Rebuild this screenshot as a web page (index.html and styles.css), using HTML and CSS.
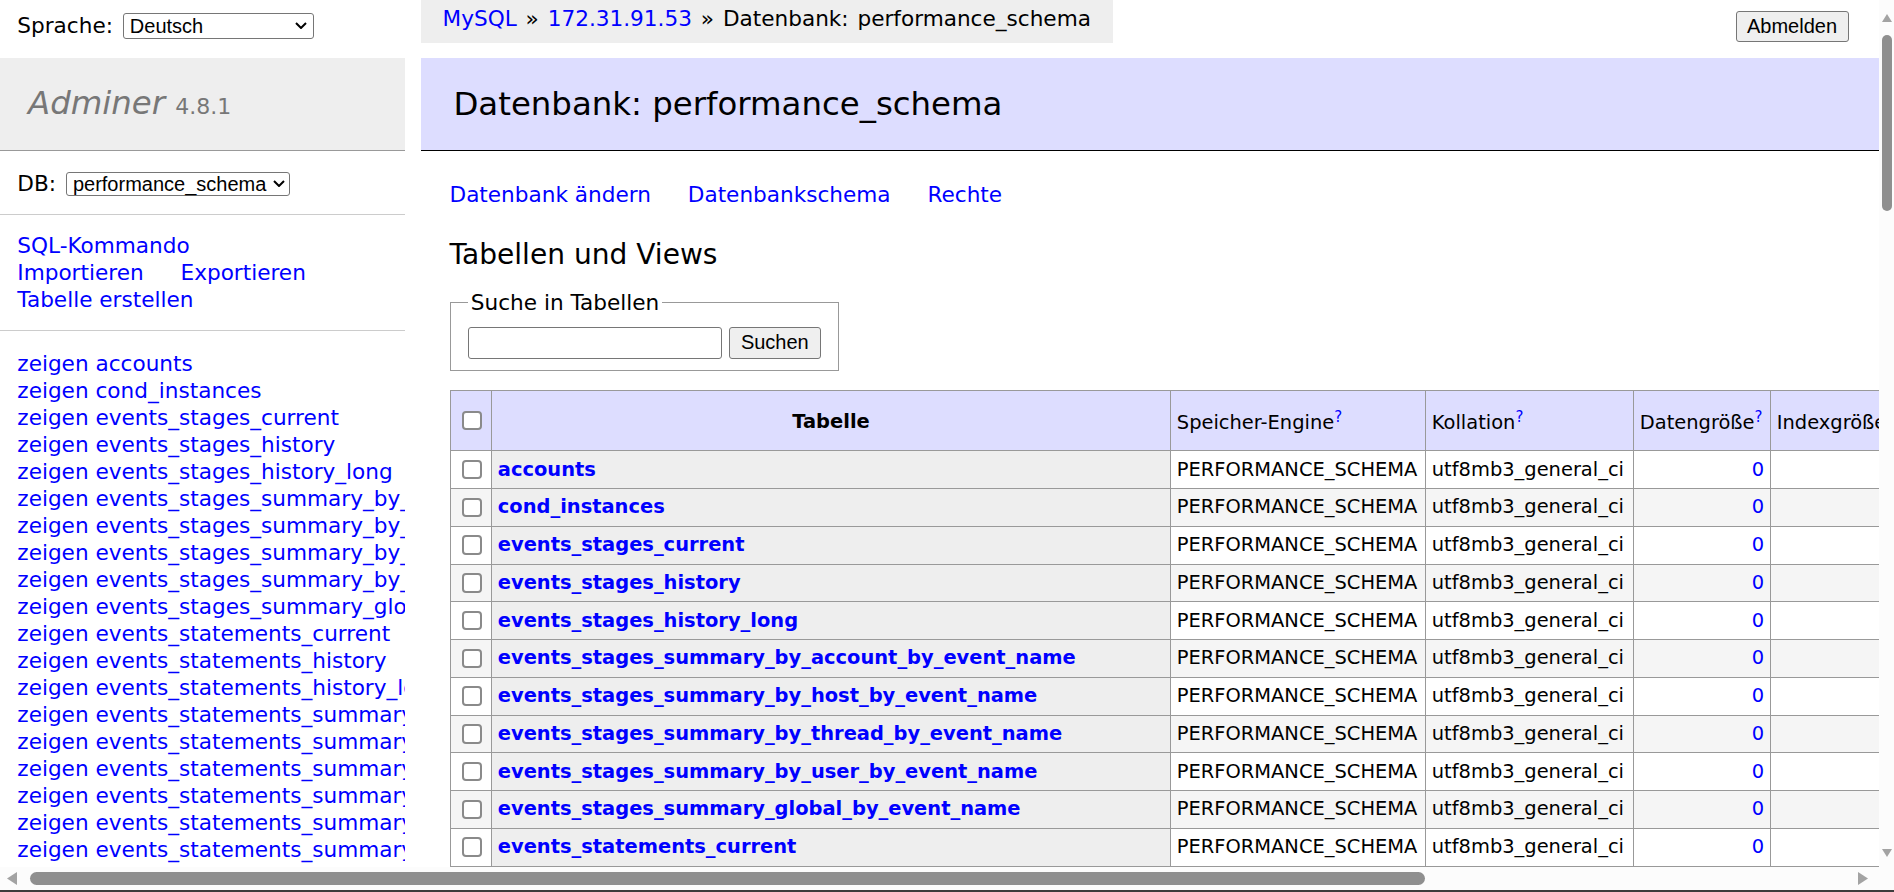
FILE: index.html
```html
<!DOCTYPE html>
<html lang="de">
<head>
<meta charset="utf-8">
<title>Datenbank: performance_schema - Adminer</title>
<link rel="stylesheet" href="styles.css">
</head>
<body>
<div class="window">
  <div class="viewport">
    <div class="page">
      <aside class="menu">
        <div class="lang">Sprache: <span class="select select-lang"><span>Deutsch</span><svg class="chev" viewBox="0 0 12 7"><polyline points="1,1 6,6 11,1" fill="none" stroke="#000" stroke-width="2"/></svg></span></div>
        <h1 class="logo">Adminer <span class="version">4.8.1</span></h1>
        <div class="menu-block db-block">DB: <span class="select select-db"><span>performance_schema</span><svg class="chev" viewBox="0 0 12 7"><polyline points="1,1 6,6 11,1" fill="none" stroke="#000" stroke-width="2"/></svg></span></div>
        <div class="menu-block links">
          <a href="#">SQL-Kommando</a><br>
          <a href="#">Importieren</a> <a href="#">Exportieren</a><br>
          <a href="#">Tabelle erstellen</a>
        </div>
        <ul class="tablelist">
          <li><a href="#">zeigen</a> <a href="#">accounts</a></li>
          <li><a href="#">zeigen</a> <a href="#">cond_instances</a></li>
          <li><a href="#">zeigen</a> <a href="#">events_stages_current</a></li>
          <li><a href="#">zeigen</a> <a href="#">events_stages_history</a></li>
          <li><a href="#">zeigen</a> <a href="#">events_stages_history_long</a></li>
          <li><a href="#">zeigen</a> <a href="#">events_stages_summary_by_account_by_event_name</a></li>
          <li><a href="#">zeigen</a> <a href="#">events_stages_summary_by_host_by_event_name</a></li>
          <li><a href="#">zeigen</a> <a href="#">events_stages_summary_by_thread_by_event_name</a></li>
          <li><a href="#">zeigen</a> <a href="#">events_stages_summary_by_user_by_event_name</a></li>
          <li><a href="#">zeigen</a> <a href="#">events_stages_summary_global_by_event_name</a></li>
          <li><a href="#">zeigen</a> <a href="#">events_statements_current</a></li>
          <li><a href="#">zeigen</a> <a href="#">events_statements_history</a></li>
          <li><a href="#">zeigen</a> <a href="#">events_statements_history_long</a></li>
          <li><a href="#">zeigen</a> <a href="#">events_statements_summary_by_account_by_event_name</a></li>
          <li><a href="#">zeigen</a> <a href="#">events_statements_summary_by_digest</a></li>
          <li><a href="#">zeigen</a> <a href="#">events_statements_summary_by_host_by_event_name</a></li>
          <li><a href="#">zeigen</a> <a href="#">events_statements_summary_by_program</a></li>
          <li><a href="#">zeigen</a> <a href="#">events_statements_summary_by_thread_by_event_name</a></li>
          <li><a href="#">zeigen</a> <a href="#">events_statements_summary_by_user_by_event_name</a></li>
          <li><a href="#">zeigen</a> <a href="#">events_statements_summary_global_by_event_name</a></li>
          <li><a href="#">zeigen</a> <a href="#">events_transactions_current</a></li>
        </ul>
      </aside>
      <main class="main">
        <div class="topbar">
          <div class="breadcrumb"><a href="#">MySQL</a> » <a href="#">172.31.91.53</a> » Datenbank: performance_schema</div>
          <button class="btn logout" type="button">Abmelden</button>
        </div>
        <div class="content">
          <h2 class="title">Datenbank: performance_schema</h2>
          <p class="dblinks"><a href="#">Datenbank ändern</a> <a href="#">Datenbankschema</a> <a href="#">Rechte</a></p>
          <h3 class="subtitle">Tabellen und Views</h3>
          <fieldset class="search">
            <legend>Suche in Tabellen</legend>
            <div class="search-row"><input class="search-input" type="search" aria-label="Suche"><button class="btn search-btn" type="button">Suchen</button></div>
          </fieldset>
          <table class="tbl">
            <colgroup>
              <col class="c-cb"><col class="c-name"><col class="c-engine"><col class="c-coll"><col class="c-size"><col class="c-size2"><col class="c-free"><col class="c-auto"><col class="c-rows"><col class="c-comment">
            </colgroup>
            <thead>
              <tr>
                <td><input class="cb" type="checkbox" aria-label="alle"></td>
                <th class="th-name">Tabelle</th>
                <td>Speicher-Engine<sup><a href="#">?</a></sup></td>
                <td>Kollation<sup><a href="#">?</a></sup></td>
                <td>Datengröße<sup><a href="#">?</a></sup></td>
                <td>Indexgröße<sup><a href="#">?</a></sup></td>
                <td>Datenfreiraum<sup><a href="#">?</a></sup></td>
                <td>Auto-Inkrement<sup><a href="#">?</a></sup></td>
                <td>Datensätze<sup><a href="#">?</a></sup></td>
                <td>Kommentar<sup><a href="#">?</a></sup></td>
              </tr>
            </thead>
            <tbody>
              <tr><td><input class="cb" type="checkbox" aria-label="accounts"></td><th><a href="#">accounts</a></th><td>PERFORMANCE_SCHEMA</td><td>utf8mb3_general_ci</td><td class="num"><a href="#">0</a></td><td class="num"><a href="#">0</a></td><td></td><td></td><td class="num">~1</td><td></td></tr>
              <tr><td><input class="cb" type="checkbox" aria-label="cond_instances"></td><th><a href="#">cond_instances</a></th><td>PERFORMANCE_SCHEMA</td><td>utf8mb3_general_ci</td><td class="num"><a href="#">0</a></td><td class="num"><a href="#">0</a></td><td></td><td></td><td class="num">~1</td><td></td></tr>
              <tr><td><input class="cb" type="checkbox" aria-label="events_stages_current"></td><th><a href="#">events_stages_current</a></th><td>PERFORMANCE_SCHEMA</td><td>utf8mb3_general_ci</td><td class="num"><a href="#">0</a></td><td class="num"><a href="#">0</a></td><td></td><td></td><td class="num">~1</td><td></td></tr>
              <tr><td><input class="cb" type="checkbox" aria-label="events_stages_history"></td><th><a href="#">events_stages_history</a></th><td>PERFORMANCE_SCHEMA</td><td>utf8mb3_general_ci</td><td class="num"><a href="#">0</a></td><td class="num"><a href="#">0</a></td><td></td><td></td><td class="num">~1</td><td></td></tr>
              <tr><td><input class="cb" type="checkbox" aria-label="events_stages_history_long"></td><th><a href="#">events_stages_history_long</a></th><td>PERFORMANCE_SCHEMA</td><td>utf8mb3_general_ci</td><td class="num"><a href="#">0</a></td><td class="num"><a href="#">0</a></td><td></td><td></td><td class="num">~1</td><td></td></tr>
              <tr><td><input class="cb" type="checkbox" aria-label="events_stages_summary_by_account_by_event_name"></td><th><a href="#">events_stages_summary_by_account_by_event_name</a></th><td>PERFORMANCE_SCHEMA</td><td>utf8mb3_general_ci</td><td class="num"><a href="#">0</a></td><td class="num"><a href="#">0</a></td><td></td><td></td><td class="num">~1</td><td></td></tr>
              <tr><td><input class="cb" type="checkbox" aria-label="events_stages_summary_by_host_by_event_name"></td><th><a href="#">events_stages_summary_by_host_by_event_name</a></th><td>PERFORMANCE_SCHEMA</td><td>utf8mb3_general_ci</td><td class="num"><a href="#">0</a></td><td class="num"><a href="#">0</a></td><td></td><td></td><td class="num">~1</td><td></td></tr>
              <tr><td><input class="cb" type="checkbox" aria-label="events_stages_summary_by_thread_by_event_name"></td><th><a href="#">events_stages_summary_by_thread_by_event_name</a></th><td>PERFORMANCE_SCHEMA</td><td>utf8mb3_general_ci</td><td class="num"><a href="#">0</a></td><td class="num"><a href="#">0</a></td><td></td><td></td><td class="num">~1</td><td></td></tr>
              <tr><td><input class="cb" type="checkbox" aria-label="events_stages_summary_by_user_by_event_name"></td><th><a href="#">events_stages_summary_by_user_by_event_name</a></th><td>PERFORMANCE_SCHEMA</td><td>utf8mb3_general_ci</td><td class="num"><a href="#">0</a></td><td class="num"><a href="#">0</a></td><td></td><td></td><td class="num">~1</td><td></td></tr>
              <tr><td><input class="cb" type="checkbox" aria-label="events_stages_summary_global_by_event_name"></td><th><a href="#">events_stages_summary_global_by_event_name</a></th><td>PERFORMANCE_SCHEMA</td><td>utf8mb3_general_ci</td><td class="num"><a href="#">0</a></td><td class="num"><a href="#">0</a></td><td></td><td></td><td class="num">~1</td><td></td></tr>
              <tr><td><input class="cb" type="checkbox" aria-label="events_statements_current"></td><th><a href="#">events_statements_current</a></th><td>PERFORMANCE_SCHEMA</td><td>utf8mb3_general_ci</td><td class="num"><a href="#">0</a></td><td class="num"><a href="#">0</a></td><td></td><td></td><td class="num">~1</td><td></td></tr>
              <tr><td><input class="cb" type="checkbox" aria-label="events_statements_history"></td><th><a href="#">events_statements_history</a></th><td>PERFORMANCE_SCHEMA</td><td>utf8mb3_general_ci</td><td class="num"><a href="#">0</a></td><td class="num"><a href="#">0</a></td><td></td><td></td><td class="num">~1</td><td></td></tr>
            </tbody>
          </table>
        </div>
      </main>
    </div>
  </div>
  <div class="vscroll">
    <svg class="arrow-v" viewBox="0 0 10 8"><polygon points="0,8 5,0 10,8" fill="#a3a3a3"/></svg>
    <div class="vthumb"></div>
    <div class="fill"></div>
    <svg class="arrow-v" viewBox="0 0 10 8"><polygon points="0,0 10,0 5,8" fill="#a3a3a3"/></svg>
  </div>
  <div class="hscroll">
    <svg class="arrow-h" viewBox="0 0 10 13"><polygon points="10,0 10,13 0,6.5" fill="#a3a3a3"/></svg>
    <div class="hthumb"></div>
    <div class="fill"></div>
    <svg class="arrow-h" viewBox="0 0 10 13"><polygon points="0,0 10,6.5 0,13" fill="#a3a3a3"/></svg>
  </div>
  <div class="corner"></div>
</div>
</body>
</html>
```

FILE: styles.css
```css
* { box-sizing: border-box; }

html, body {
  margin: 0;
  height: 100%;
  overflow: hidden;
}

body {
  font-family: "DejaVu Sans", Verdana, sans-serif;
  font-size: 21.6px;
  line-height: 27px;
  color: #000;
  background: #fff;
}

a { color: #00f; text-decoration: none; }

/* window frame with fake scrollbars */
.window {
  display: grid;
  grid-template-columns: 1879px 15px;
  grid-template-rows: 867px 23px;
  height: 892px;
  border-bottom: 2px solid #3c3c3c;
}

.viewport { overflow: hidden; }

.page {
  display: flex;
  align-items: flex-start;
  width: 2464px;
}

/* sidebar */
.menu {
  flex: none;
  width: 405px;
}

.lang {
  height: 57.5px;
  padding: 6.5px 17.3px 0;
  line-height: 38.9px;
  white-space: nowrap;
}

.select {
  display: inline-flex;
  align-items: center;
  justify-content: space-between;
  margin-left: 3px;
  padding: 0 6px 0 6px;
  border: 1px solid #767676;
  border-radius: 3px;
  background: #fff;
  font-family: "Liberation Sans", Arial, sans-serif;
  font-size: 20px;
  line-height: 22px;
  vertical-align: baseline;
}

.select-lang { width: 191px; height: 26px; }
.select-db { width: 224px; height: 24px; padding-right: 4px; }

.chev { width: 12px; height: 7px; flex: none; }

.logo {
  margin: 0;
  padding: 25.9px 25.9px 25.9px 28px;
  font-size: 32.4px;
  line-height: 40.5px;
  font-weight: normal;
  font-style: italic;
  color: #777;
  background: #eee;
  border-bottom: 1px solid #999;
  white-space: nowrap;
}

.version {
  font-size: 22px;
  line-height: 20px;
  font-style: normal;
  color: #777;
}

.menu-block {
  padding: 17.3px;
  border-bottom: 1px solid #ccc;
  white-space: nowrap;
}

.db-block { padding-top: 18.8px; }

.links a { margin-right: 30px; }

.tablelist {
  margin: 0;
  padding: 18.6px 17.3px 17.3px;
  list-style: none;
  white-space: nowrap;
  overflow: hidden;
}

/* main */
.main {
  flex: none;
  width: 2043px;
  margin-left: 16px;
}

.topbar {
  display: flex;
  justify-content: space-between;
  align-items: flex-start;
  width: 1457px;
  height: 43.2px;
  padding-right: 29.5px;
}

.breadcrumb {
  height: 43.2px;
  padding: 0 21.6px;
  line-height: 38.9px;
  word-spacing: 2px;
  background: #eee;
  white-space: nowrap;
}

.btn {
  font-family: "Liberation Sans", Arial, sans-serif;
  font-size: 20px;
  color: #000;
  background: #efefef;
  border: 1px solid #767676;
  border-radius: 3px;
  padding: 0;
}

.logout {
  margin-top: 10.8px;
  width: 113px;
  height: 31px;
}

.content {
  padding: 15px 30px 30px 28.5px;
}

.title {
  margin: 0 0 30px -28.5px;
  padding: 25.9px 32.4px;
  font-size: 32.4px;
  line-height: 40.5px;
  font-weight: normal;
  background: #ddf;
  border-bottom: 1px solid #000;
}

.dblinks { margin: 0; white-space: nowrap; }
.dblinks a { margin-right: 30px; }

.subtitle {
  margin: 28.1px 0 0;
  font-size: 28.08px;
  line-height: 35.1px;
  font-weight: normal;
}

.search {
  width: fit-content;
  margin: 17.3px 0 0;
  padding: 10.8px 17.3px;
  border: 1px solid #999;
}

.search legend {
  padding: 0 3px;
  line-height: 27px;
}

.search-row {
  display: flex;
  align-items: center;
  gap: 7px;
}

.search-input {
  width: 254px;
  height: 32px;
  margin: 0;
  border: 1px solid #767676;
  border-radius: 3px;
  background: #fff;
}

.search-btn { width: 92px; height: 32px; }

/* table */
.tbl {
  margin-top: 19.44px;
  border-collapse: collapse;
  table-layout: fixed;
  width: 2091px;
  font-size: 19.44px;
  line-height: 24.3px;
  white-space: nowrap;
}

.c-cb { width: 41.5px; }
.c-name { width: 679px; }
.c-engine { width: 255px; }
.c-coll { width: 208px; }
.c-size { width: 137px; }
.c-size2 { width: 140px; }
.c-free { width: 160px; }
.c-auto { width: 170px; }
.c-rows { width: 150px; }
.c-comment { width: 150px; }

.tbl td, .tbl th {
  border: 1px solid #999;
  padding: 3.9px 5.8px;
  vertical-align: middle;
  overflow: hidden;
}

.tbl thead tr { height: 60.3px; }
.tbl thead td, .tbl thead th { background: #ddf; }
.tbl thead td { padding-top: 8px; }
.tbl .th-name { text-align: center; padding: 6px 9.7px 3.9px; }

.tbl tbody tr { height: 37.75px; }
.tbl tbody tr:nth-child(even) { background: #f5f5f5; }
.tbl tbody th { background: #eee; text-align: left; }

.tbl sup { font-size: 15px; line-height: 0; }

.tbl thead td:first-child { padding-top: 3.9px; }

.num { text-align: right; }

.cb {
  appearance: none;
  display: block;
  width: 19.5px;
  height: 19.5px;
  margin: 0 4.5px 0 6px;
  border: 2px solid #8a8a8a;
  border-radius: 4px;
  background: #fff;
}

/* fake scrollbars */
.vscroll {
  display: flex;
  flex-direction: column;
  align-items: center;
  padding: 14px 0 10px;
  background: #fcfcfc;
}

.arrow-v { width: 10px; height: 8px; flex: none; }

.vthumb {
  width: 10px;
  height: 176px;
  margin-top: 13px;
  border-radius: 5px;
  background: #8f8f8f;
}

.fill { flex: 1; }

.hscroll {
  display: flex;
  align-items: center;
  padding: 0 11px 0 7px;
  background: #fcfcfc;
}

.arrow-h { width: 10px; height: 13px; flex: none; }

.hthumb {
  width: 1395px;
  height: 13px;
  margin-left: 13px;
  border-radius: 6.5px;
  background: #8f8f8f;
}

.corner { background: #fcfcfc; }
```
